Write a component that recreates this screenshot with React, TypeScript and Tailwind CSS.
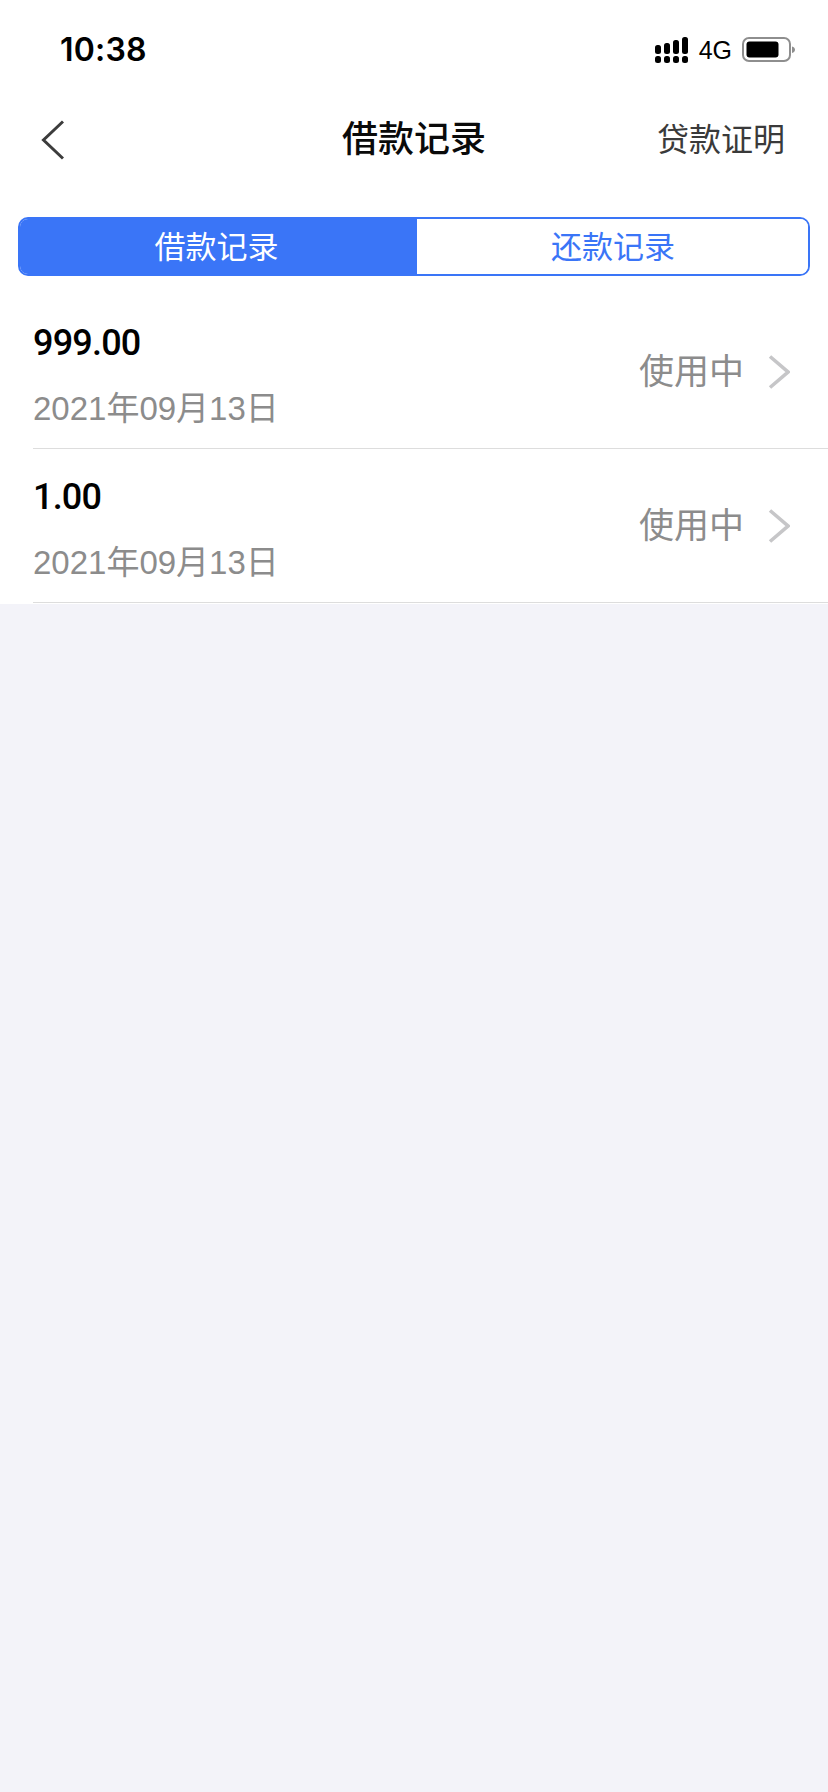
const cjk = "font-['Liberation_Sans','Noto_Sans_CJK_SC',sans-serif]";

function Signal() {
  return (
    <svg width="34" height="26" viewBox="0 0 34 26" fill="#000">
      <rect x="0" y="8" width="6" height="9" rx="2.5" />
      <rect x="9" y="6" width="6" height="11" rx="2.5" />
      <rect x="18" y="3" width="6" height="14" rx="2.5" />
      <rect x="27" y="0" width="6" height="17" rx="2.5" />
      <rect x="0" y="19" width="6" height="7" rx="2.5" />
      <rect x="9" y="19" width="6" height="7" rx="2.5" />
      <rect x="18" y="19" width="6" height="7" rx="2.5" />
      <rect x="27" y="19" width="6" height="7" rx="2.5" />
    </svg>
  );
}

function Battery() {
  return (
    <svg width="54" height="26" viewBox="0 0 54 26">
      <rect x="1" y="1" width="47" height="23" rx="6" fill="none" stroke="#8e8e8e" strokeWidth="2" />
      <rect x="4.5" y="4.5" width="32" height="16" rx="3" fill="#000" />
      <path d="M50 9.5c2 .6 3 1.7 3 3.2s-1 2.6-3 3.2z" fill="#8e8e8e" />
    </svg>
  );
}

function Row({ amount }: { amount: string }) {
  return (
    <div className="ml-[33px] h-[154px] flex items-center border-b border-[#dddddd] pr-[38px]">
      <div className="flex-1 pt-[8px]">
        <div className="font-['Roboto',sans-serif] font-medium text-[36px] leading-[42px] tracking-[-0.8px] text-black">{amount}</div>
        <div className={`${cjk} mt-[25px] text-[33px] leading-[40px] text-[#8c8c8c]`}>2021年09月13日</div>
      </div>
      <div className={`${cjk} text-[35px] leading-[44px] text-[#8c8c8c]`}>使用中</div>
      <svg className="ml-[24px]" width="22" height="34" viewBox="0 0 22 34" fill="none">
        <path d="M2 1.5 20 17 2 32.5" stroke="#c6c6c8" strokeWidth="3.6" />
      </svg>
    </div>
  );
}

export default function App() {
  return (
    <div className={`${cjk} w-[828px] h-[1792px] bg-[#f3f3f9] flex flex-col`}>
      <div className="bg-white pb-[1px]">
        <div className="h-[88px] flex items-center justify-between pl-[60px] pr-[32px] pt-[12px]">
          <span className="font-['Inter',sans-serif] font-semibold text-[32px] tracking-[0.2px] text-black leading-none">10:38</span>
          <div className="flex items-center">
            <Signal />
            <span className="ml-[10px] font-['Liberation_Sans',sans-serif] text-[25px] leading-none text-black">4G</span>
            <span className="ml-[10px] flex"><Battery /></span>
          </div>
        </div>
        <div className="h-[129px] flex items-start">
          <div className="w-full h-[104px] pl-[41px] pr-[43px] flex items-center justify-between relative">
            <svg width="23" height="40" viewBox="0 0 23 40" fill="none">
              <path d="M22 1.5 2.5 20 22 38.5" stroke="#3c3c3c" strokeWidth="3" />
            </svg>
            <div className="absolute left-0 right-0 text-center text-[36px] font-medium text-[#0a0a0a]">借款记录</div>
            <div className="text-[32px] text-[#3a3a3a]">贷款证明</div>
          </div>
        </div>
        <div className="mx-[18px] h-[59px] flex rounded-[10px] border-2 border-[#3a75f7] overflow-hidden text-[31px] leading-[56px]">
          <div className="w-[397px] pr-[4px] pt-[2px] bg-[#3a75f7] text-white flex items-center justify-center">借款记录</div>
          <div className="flex-1 pl-[1px] pt-[2px] bg-white text-[#3a75f7] flex items-center justify-center">还款记录</div>
        </div>
        <div className="pt-[19px]">
          <Row amount="999.00" />
          <Row amount="1.00" />
        </div>
      </div>
    </div>
  );
}
